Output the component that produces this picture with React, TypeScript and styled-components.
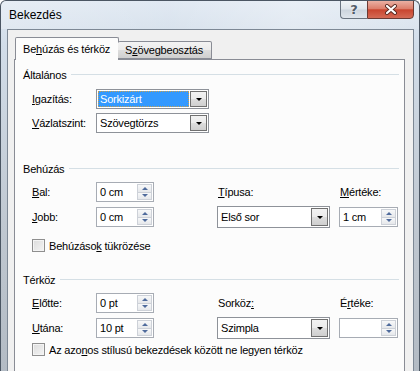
import React from 'react';
import styled, { createGlobalStyle } from 'styled-components';

const GlobalStyle = createGlobalStyle`
  html, body {
    margin: 0;
    padding: 0;
    background: #fff;
  }
  body {
    font-family: "Liberation Sans", Arial, sans-serif;
    font-size: 11px;
    letter-spacing: -0.2px;
    color: #000;
  }
`;

const Window = styled.div`
  width: 420px;
  height: 371px;
  box-sizing: border-box;
  overflow: hidden;
  display: flex;
  flex-direction: column;
  border: 1px solid #4b5663;
  border-bottom: none;
  border-radius: 6px 6px 0 0;
  background: linear-gradient(180deg, #dfe8f2 0%, #d2dde9 12%, #c0c8d1 60%, #b3bbc4 100%);
`;

const TitleBar = styled.div`
  height: 28px;
  flex: none;
  display: flex;
  align-items: flex-start;
  background: linear-gradient(90deg, rgba(255, 255, 255, 0.25), rgba(255, 255, 255, 0.05) 40%, rgba(255, 255, 255, 0.3) 70%, rgba(255, 255, 255, 0.1));
`;

const Title = styled.div`
  padding: 7px 0 0 8px;
  font-size: 12px;
  letter-spacing: 0;
  color: #000;
`;

const CaptionButtons = styled.div`
  margin-left: auto;
  margin-right: 5px;
  margin-top: -1px;
  display: flex;
`;

const HelpButton = styled.div`
  width: 27px;
  height: 19px;
  box-sizing: border-box;
  border: 1px solid #6a7480;
  border-right: none;
  border-radius: 0 0 0 4px;
  background: linear-gradient(180deg, #f1f4f7 0%, #dfe5eb 48%, #ccd4dd 52%, #dfe5ec 100%);
  display: flex;
  align-items: center;
  justify-content: center;
  font-family: "DejaVu Sans", sans-serif;
  font-size: 13px;
  font-weight: bold;
  letter-spacing: 0;
  color: #535c68;
  text-shadow: 0 0 2px #fff;
`;

const CloseButton = styled.div`
  width: 47px;
  height: 19px;
  box-sizing: border-box;
  border: 1px solid #6b3a33;
  border-radius: 0 0 4px 0;
  background: linear-gradient(180deg, #eab0a3 0%, #dc7f6c 45%, #c9452f 52%, #d46a55 100%);
  display: flex;
  align-items: center;
  justify-content: center;
`;

const Client = styled.div`
  flex: 1;
  margin: 0 5px 0 6px;
  border: 1px solid #7d8895;
  border-bottom: none;
  background: #f0f0f0;
  padding: 7px 8px 0 6px;
  display: flex;
  flex-direction: column;
`;

const TabRow = styled.div`
  display: flex;
  align-items: flex-end;
  height: 23px;
  position: relative;
  z-index: 1;
`;

const Tab = styled.div<{ $active?: boolean }>`
  box-sizing: border-box;
  border: 1px solid #898c95;
  border-radius: 2px 2px 0 0;
  white-space: nowrap;
  ${(p) =>
    p.$active
      ? `
    height: 23px;
    margin-left: 1px;
    padding: 5px 8px 0 7px;
    border-bottom: none;
    background: #fcfcfc;
  `
      : `
    height: 18px;
    margin-bottom: 1px;
    margin-left: -1px;
    padding: 2px 8px 0 7px;
    border-left: none;
    background: linear-gradient(180deg, #f3f3f3 0%, #ebebeb 50%, #dddddd 51%, #cfcfcf 100%);
  `}
`;

const Panel = styled.div`
  flex: 1;
  margin-top: -1px;
  border: 1px solid #898c95;
  border-bottom: none;
  background: #fcfcfc;
  padding: 8px 5px 0 8px;
`;

const SectionHeader = styled.div<{ $gap: number }>`
  display: flex;
  align-items: center;
  gap: 5px;
  height: 13px;
  margin-top: ${(p) => p.$gap}px;
`;

const Rule = styled.div`
  flex: 1;
  height: 1px;
  background: #d5dfe5;
`;

const FieldGrid = styled.div<{ $cols: string; $rowGap: number; $top?: number }>`
  display: grid;
  grid-template-columns: ${(p) => p.$cols};
  grid-auto-rows: 20px;
  row-gap: ${(p) => p.$rowGap}px;
  margin: ${(p) => p.$top ?? 7}px 0 0 9px;
  align-items: center;
`;

const Label = styled.span<{ $col?: number }>`
  white-space: nowrap;
  ${(p) => (p.$col ? `grid-column: ${p.$col}; padding-left: 1px;` : '')}
`;

const Key = styled.u`
  text-decoration: underline;
`;

const SpinBox = styled.div<{ $col?: number }>`
  height: 20px;
  box-sizing: border-box;
  border: 1px solid #a7acb4;
  background: #fff;
  display: flex;
  align-items: center;
  ${(p) => (p.$col ? `grid-column: ${p.$col};` : '')}
`;

const FieldText = styled.span`
  flex: 1;
  padding-left: 3px;
  white-space: nowrap;
`;

const SpinButtons = styled.div`
  width: 15px;
  height: 16px;
  margin-right: 1px;
  display: flex;
  flex-direction: column;
`;

const SpinHalf = styled.div`
  flex: 1;
  box-sizing: border-box;
  border: 1px solid #cdd1d8;
  background: linear-gradient(180deg, #f7f8f9 0%, #e6e8eb 100%);
  display: flex;
  align-items: center;
  justify-content: center;
  & + & {
    border-top: none;
  }
`;

const Arrow = styled.div<{ $dir: 'up' | 'down'; $color?: string; $size?: number }>`
  width: 0;
  height: 0;
  border-left: ${(p) => p.$size ?? 3}px solid transparent;
  border-right: ${(p) => p.$size ?? 3}px solid transparent;
  ${(p) =>
    p.$dir === 'up'
      ? `border-bottom: ${p.$size ?? 3}px solid ${p.$color ?? '#4f6b9c'};`
      : `border-top: ${p.$size ?? 3}px solid ${p.$color ?? '#4f6b9c'};`}
`;

const Combo = styled.div<{ $col?: number; $tall?: boolean }>`
  height: ${(p) => (p.$tall ? 22 : 20)}px;
  box-sizing: border-box;
  border: 1px solid #8e9299;
  background: #fff;
  display: flex;
  align-items: stretch;
  padding: 1px;
  ${(p) => (p.$col ? `grid-column: ${p.$col};` : '')}
`;

const ComboText = styled.div<{ $selected?: boolean }>`
  flex: 1;
  display: flex;
  align-items: center;
  padding-left: 2px;
  margin-right: 1px;
  white-space: nowrap;
  ${(p) =>
    p.$selected
      ? `
    background: #3399ff;
    color: #fff;
    outline: 1px dotted #c8a050;
    outline-offset: -1px;
  `
      : ''}
`;

const ComboButton = styled.div`
  width: 17px;
  box-sizing: border-box;
  border: 1px solid #707070;
  background: linear-gradient(180deg, #f2f2f2 0%, #ebebeb 50%, #dddddd 51%, #cfcfcf 100%);
  display: flex;
  align-items: center;
  justify-content: center;
`;

const CheckRow = styled.div<{ $gap: number }>`
  display: flex;
  align-items: center;
  gap: 4px;
  height: 13px;
  margin: ${(p) => p.$gap}px 0 0 9px;
  white-space: nowrap;
`;

const CheckBox = styled.div`
  width: 13px;
  height: 13px;
  box-sizing: border-box;
  border: 1px solid #8f8f8f;
  background: linear-gradient(135deg, #dcdcdc 0%, #f4f4f4 100%);
  box-shadow: inset 0 0 0 1px #f4f4f4;
`;

const Spin = ({ value, col }: { value: string; col?: number }) => (
  <SpinBox $col={col}>
    <FieldText>{value}</FieldText>
    <SpinButtons>
      <SpinHalf>
        <Arrow $dir="up" />
      </SpinHalf>
      <SpinHalf>
        <Arrow $dir="down" />
      </SpinHalf>
    </SpinButtons>
  </SpinBox>
);

const Dropdown = ({ value, col, selected, tall }: { value: string; col?: number; selected?: boolean; tall?: boolean }) => (
  <Combo $col={col} $tall={tall}>
    <ComboText $selected={selected}>{value}</ComboText>
    <ComboButton>
      <Arrow $dir="down" $color="#000" $size={3} />
    </ComboButton>
  </Combo>
);

const CloseIcon = () => (
  <svg width="14" height="11" viewBox="0 0 14 11">
    <path d="M3 2 L11 9 M11 2 L3 9" stroke="#5a2a22" strokeWidth="4" strokeLinecap="round" />
    <path d="M3 2 L11 9 M11 2 L3 9" stroke="#fff" strokeWidth="2.2" strokeLinecap="round" />
  </svg>
);

const SpacingCols = '64px 58px 63px 113px 9px 59px';

export default function App() {
  return (
    <>
      <GlobalStyle />
      <Window>
        <TitleBar>
          <Title>Bekezdés</Title>
          <CaptionButtons>
            <HelpButton>?</HelpButton>
            <CloseButton>
              <CloseIcon />
            </CloseButton>
          </CaptionButtons>
        </TitleBar>
        <Client>
          <TabRow>
            <Tab $active>
              Be<Key>h</Key>úzás és térköz
            </Tab>
            <Tab>
              S<Key>z</Key>övegbeosztás
            </Tab>
          </TabRow>
          <Panel>
            <SectionHeader $gap={0}>
              <span>Általános</span>
              <Rule />
            </SectionHeader>
            <FieldGrid $cols="64px 113px" $rowGap={4} $top={8}>
              <Label>
                <Key>I</Key>gazítás:
              </Label>
              <Dropdown value="Sorkizárt" selected />
              <Label>
                <Key>V</Key>ázlatszint:
              </Label>
              <Dropdown value="Szövegtörzs" />
            </FieldGrid>

            <SectionHeader $gap={29}>
              <span>Behúzás</span>
              <Rule />
            </SectionHeader>
            <FieldGrid $cols={SpacingCols} $rowGap={5}>
              <Label>
                <Key>B</Key>al:
              </Label>
              <Spin value="0 cm" />
              <Label $col={4}>
                <Key>T</Key>ípusa:
              </Label>
              <Label $col={6}>
                <Key>M</Key>értéke:
              </Label>
              <Label>
                <Key>J</Key>obb:
              </Label>
              <Spin value="0 cm" />
              <Dropdown value="Első sor" col={4} tall />
              <Spin value="1 cm" col={6} />
            </FieldGrid>
            <CheckRow $gap={12}>
              <CheckBox />
              <span>
                Behúzáso<Key>k</Key> tükrözése
              </span>
            </CheckRow>

            <SectionHeader $gap={21}>
              <span>Térköz</span>
              <Rule />
            </SectionHeader>
            <FieldGrid $cols={SpacingCols} $rowGap={5}>
              <Label>
                <Key>E</Key>lőtte:
              </Label>
              <Spin value="0 pt" />
              <Label $col={4}>
                Sorköz<Key>:</Key>
              </Label>
              <Label $col={6}>
                É<Key>r</Key>téke:
              </Label>
              <Label>
                <Key>U</Key>tána:
              </Label>
              <Spin value="10 pt" />
              <Dropdown value="Szimpla" col={4} tall />
              <Spin value="" col={6} />
            </FieldGrid>
            <CheckRow $gap={5}>
              <CheckBox />
              <span>
                Az azo<Key>n</Key>os stílusú bekezdések között ne legyen térköz
              </span>
            </CheckRow>
          </Panel>
        </Client>
      </Window>
    </>
  );
}
